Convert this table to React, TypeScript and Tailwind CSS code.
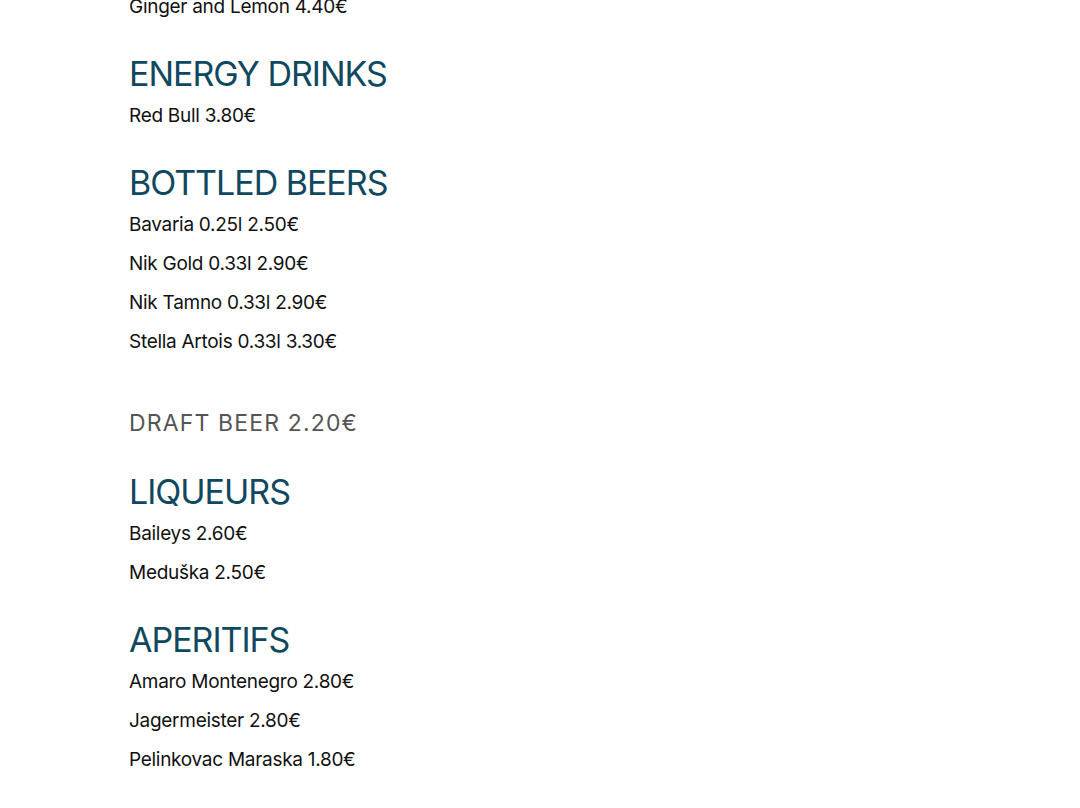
const sections = [
  {
    title: 'ENERGY DRINKS',
    items: ['Red Bull 3.80€'],
  },
  {
    title: 'BOTTLED BEERS',
    items: ['Bavaria 0.25l 2.50€', 'Nik Gold 0.33l 2.90€', 'Nik Tamno 0.33l 2.90€', 'Stella Artois 0.33l 3.30€'],
  },
];

const sectionsAfter = [
  {
    title: 'LIQUEURS',
    items: ['Baileys 2.60€', 'Meduška 2.50€'],
  },
  {
    title: 'APERITIFS',
    items: ['Amaro Montenegro 2.80€', 'Jagermeister 2.80€', 'Pelinkovac Maraska 1.80€'],
  },
];

function MenuSection({ title, items }: { title: string; items: string[] }) {
  return (
    <div className="mt-[25px]">
      <h2 className="text-[34px] leading-[45px] tracking-[-0.03em] text-[#104860] font-normal">{title}</h2>
      {items.map((item) => (
        <p key={item} className="text-[19px] leading-[39px] tracking-[-0.015em] text-[#111111]">
          {item}
        </p>
      ))}
    </div>
  );
}

export default function App() {
  return (
    <div className="h-[808px] overflow-hidden bg-white font-['Inter',sans-serif]">
      <div className="pl-[129px] -mt-[13px]">
        <p className="text-[19px] leading-[39px] tracking-[-0.015em] text-[#111111]">Ginger and Lemon 4.40€</p>
        {sections.map((s) => (
          <MenuSection key={s.title} title={s.title} items={s.items} />
        ))}
        <p className="mt-[47px] text-[23px] leading-[30px] tracking-[0.05em] text-[#555555]">DRAFT BEER 2.20€</p>
        <div className="pt-[6px]">
          {sectionsAfter.map((s) => (
            <MenuSection key={s.title} title={s.title} items={s.items} />
          ))}
        </div>
      </div>
    </div>
  );
}
